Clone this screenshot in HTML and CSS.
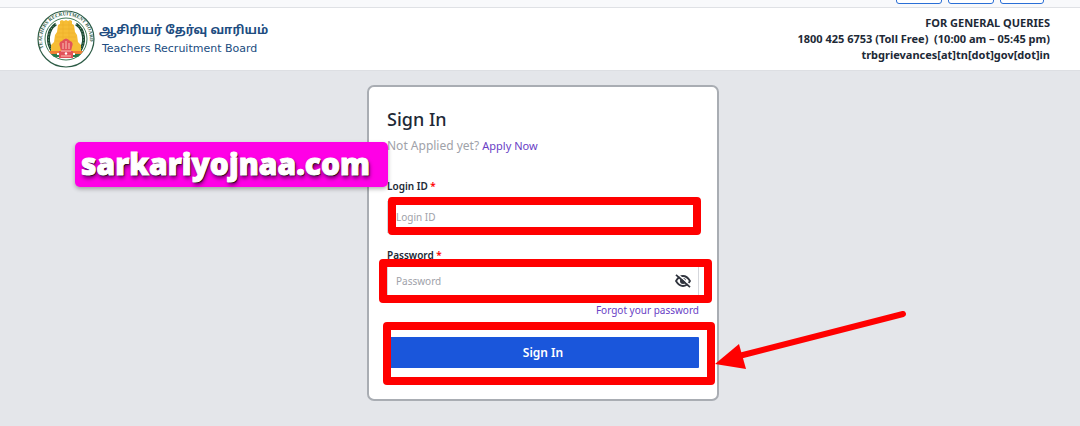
FILE: index.html
```html
<!DOCTYPE html>
<html lang="en">
<head>
  <meta charset="UTF-8" />
  <meta name="viewport" content="width=device-width, initial-scale=1.0"/>
  <title>Teachers Recruitment Board - Sign In</title>
  <link rel="stylesheet" href="styles.css">
</head>
<body>
  <!-- Top bar -->
  <div class="topbar">
    <button class="top-btn" aria-label="Decrease text"></button>
    <button class="top-btn" aria-label="Normal text"></button>
    <button class="top-btn" aria-label="Increase text"></button>
  </div>

  <header class="header">
    <div class="brand">
      <svg class="seal" viewBox="0 0 58 58" aria-hidden="true">
        <defs>
          <path id="ring" d="M7 39 A24 24 0 1 1 51 39" />
        </defs>
        <circle cx="29" cy="29" r="28" fill="#fff" stroke="#2c5b45" stroke-width="1.2" />
        <circle cx="29" cy="29" r="21" fill="#fff" stroke="#3f7a55" stroke-width="1" />
        <text class="seal-text"><textPath href="#ring" startOffset="1">TEACHERS RECRUITMENT BOARD</textPath></text>
        <!-- wreath -->
        <path d="M19 14 C10 20 9 33 16 42 M39 14 C48 20 49 33 42 42" fill="none" stroke="#1d4a34" stroke-width="3" />
        <path d="M19 14 C10 20 9 33 16 42 M39 14 C48 20 49 33 42 42" fill="none" stroke="#84ad91" stroke-width="1" stroke-dasharray="1 2" />
        <!-- tower -->
        <path d="M23 11 L25 10 L27 11 L29 10 L31 11 L33 10 L35 11 L35 14 L37 15 L38 22 L40 25 L41 32 L44 35 L44 42 H14 V35 L17 32 L18 25 L20 22 L21 15 L23 14 Z" fill="#f6bd35" />
        <path d="M22 15 H36 M21 19 H37 M20 23 H38 M19 27 H39 M18 31 H40 M26 12 V31 M32 12 V31" stroke="#eeb02a" stroke-width="0.6" fill="none" />
        <!-- flag -->
        <path d="M12 41 H46 L44 44 H14 Z" fill="#f07f35" />
        <path d="M14 44 H44 L41 47 H17 Z" fill="#287c4c" />
        <path d="M20 43 H38 V45 H20 Z" fill="#fff" />
        <!-- lions -->
        <path d="M25 31 Q29 26 33 31 Q37 32 35 37 L34 41 H36 V48 H22 V41 H24 L23 37 Q21 32 25 31 Z" fill="#e2525a" />
        <path d="M26 33 V39 M29 31 V39 M32 33 V39 M24 41 H34 M24 46 H34" stroke="#fbc3b7" stroke-width="1" fill="none" />
        <circle cx="29" cy="43.5" r="1.2" fill="#fff" />
      </svg>
      <div class="brand-names">
        <span class="brand-tamil" lang="ta">ஆசிரியர் தேர்வு வாரியம்</span>
        <span class="brand-english">Teachers Recruitment Board</span>
      </div>
    </div>
    <div class="queries">
      <div>FOR GENERAL QUERIES</div>
      <div>1800 425 6753 (Toll Free)&nbsp; (10:00 am – 05:45 pm)</div>
      <div>trbgrievances[at]tn[dot]gov[dot]in</div>
    </div>
  </header>

  <main class="main">
    <form class="card">
      <h2>Sign In</h2>
      <p class="apply">Not Applied yet? <a href="#">Apply Now</a></p>

      <div class="form-group">
        <label for="loginId">Login ID <span class="required">*</span></label>
        <div class="field">
          <input type="text" id="loginId" placeholder="Login ID" />
          <span class="mark mark-login"></span>
        </div>
      </div>

      <div class="form-group form-group-password">
        <label for="password">Password <span class="required">*</span></label>
        <div class="field">
          <input type="password" id="password" placeholder="Password" />
          <button type="button" class="eye" aria-label="Show password">
            <svg viewBox="0 0 16 14" aria-hidden="true">
              <path d="M1 7 Q4 2 8 2 Q12 2 15 7 Q12 12 8 12 Q4 12 1 7 Z" fill="none" stroke="#30343e" stroke-width="1.8" />
              <circle cx="8" cy="7" r="3" fill="#30343e" />
              <path d="M2.5 0 L16 12" stroke="#fff" stroke-width="1.5" />
              <path d="M1 0.8 L15 13.2" stroke="#30343e" stroke-width="1.8" />
            </svg>
          </button>
          <span class="mark mark-password"></span>
        </div>
      </div>

      <a class="forgot" href="#">Forgot your password</a>

      <div class="field">
        <button type="submit" class="submit">Sign In</button>
        <span class="mark mark-submit"></span>
        <svg class="arrow" viewBox="0 0 192 60" aria-hidden="true">
          <path d="M24 46 L188 4" stroke="#f00" stroke-width="6" stroke-linecap="round" />
          <path d="M0 54 L24 34 L31 59 Z" fill="#f00" />
        </svg>
      </div>

      <div class="sticker">sarkariyojnaa.com</div>
    </form>
  </main>
</body>
</html>
```

FILE: styles.css
```css
* {
  box-sizing: border-box;
}

body {
  margin: 0;
  min-height: 100vh;
  display: flex;
  flex-direction: column;
  font-family: "Noto Sans", "Open Sans", sans-serif;
  font-size: 10px;
  color: #212936;
  background: #e4e6ea;
  overflow-x: hidden;
}

a {
  color: #6940c5;
  text-decoration: none;
}

.topbar {
  display: flex;
  justify-content: flex-end;
  align-items: flex-end;
  gap: 6px;
  height: 8px;
  padding: 0 36px 3px;
  background: #f8f9fb;
  border-bottom: 1px solid #dfe1e5;
}

.top-btn {
  width: 46px;
  height: 16px;
  padding: 0;
  background: #fff;
  border: 1px solid #2a6fd6;
  border-radius: 3px;
}

.top-btn:last-child {
  width: 44px;
}

.header {
  display: flex;
  justify-content: space-between;
  align-items: center;
  height: 63px;
  padding: 0 30px 0 37px;
  background: #fff;
  border-bottom: 1px solid #dddfe3;
}

.brand {
  display: flex;
  align-items: center;
  gap: 4px;
}

.seal {
  width: 58px;
  height: 58px;
}

.seal-text {
  font-family: "Liberation Serif", serif;
  font-size: 5px;
  font-weight: bold;
  fill: #2c5b45;
}

.brand-names {
  display: flex;
  flex-direction: column;
  color: #204c80;
}

.brand-tamil {
  font-family: "Noto Sans Tamil", "Noto Sans", sans-serif;
  font-size: 12px;
  font-weight: bold;
  line-height: 20px;
  white-space: nowrap;
}

.brand-english {
  padding-left: 3px;
  font-family: "DejaVu Sans", sans-serif;
  font-size: 11px;
  line-height: 16px;
}

.queries {
  font-size: 11px;
  font-weight: bold;
  line-height: 16px;
  text-align: right;
}

.main {
  flex: 1;
  padding: 14px 0 24px;
}

.card {
  position: relative;
  width: 352px;
  margin: 0 auto;
  padding: 18px 18px 31px;
  left: 3px;
  background: #fff;
  border: 2px solid #a9adb3;
  border-radius: 7px;
}

h2 {
  margin: 0;
  font-size: 18px;
  font-weight: 500;
  line-height: 28px;
}

.apply {
  margin: 1px 0 20px;
  font-size: 12px;
  line-height: 24px;
  color: #a0a2a9;
}

.apply a {
  font-size: 11px;
}

.form-group label {
  display: block;
  margin-bottom: 7px;
  font-weight: 600;
  line-height: 16px;
}

.form-group-password {
  margin-top: 14px;
}

.form-group-password label {
  margin-bottom: 2px;
}

.required {
  color: #f00;
}

.field {
  position: relative;
}

.field input {
  display: block;
  width: 100%;
  height: 32px;
  padding: 0 32px 0 8px;
  font: inherit;
  color: #212936;
  background: #fff;
  border: 1px solid #d5d7dc;
}

.field input::placeholder {
  color: #a0a2a9;
}

.eye {
  position: absolute;
  top: 9px;
  right: 8px;
  width: 16px;
  height: 14px;
  padding: 0;
  background: none;
  border: none;
}

.eye svg {
  display: block;
}

.forgot {
  display: block;
  margin: 5px 0 19px;
  line-height: 16px;
  text-align: right;
}

.submit {
  display: block;
  width: 100%;
  height: 31px;
  padding: 0;
  font: inherit;
  font-size: 12px;
  font-weight: 600;
  color: #fff;
  background: #1a56db;
  border: none;
  border-radius: 1px;
}

/* Highlights over the fields */
.mark {
  position: absolute;
  border: 8px solid #f00;
  border-radius: 4px;
  pointer-events: none;
}

.mark-login {
  inset: -4px -2px -2px 1px;
}

.mark-password {
  inset: -6px -13px -6px -8px;
}

.mark-submit {
  inset: -15px -16px -17px -4px;
}

.arrow {
  position: absolute;
  top: -27px;
  left: calc(100% + 16px);
  width: 192px;
  height: 60px;
}

.sticker {
  position: absolute;
  top: 55px;
  left: -294px;
  width: 313px;
  height: 45px;
  padding-left: 6px;
  font-family: "Noto Sans", sans-serif;
  font-size: 30px;
  font-weight: 900;
  line-height: 43px;
  color: #fff;
  white-space: nowrap;
  background: #ff00e6;
  border-radius: 5px;
  box-shadow: 0 2px 4px rgba(0, 0, 0, 0.3);
  -webkit-text-stroke: 1px #fff;
  text-shadow: 1px 1px 1px #000, 1px 3px 4px rgba(0, 0, 0, 0.6);
}
```
